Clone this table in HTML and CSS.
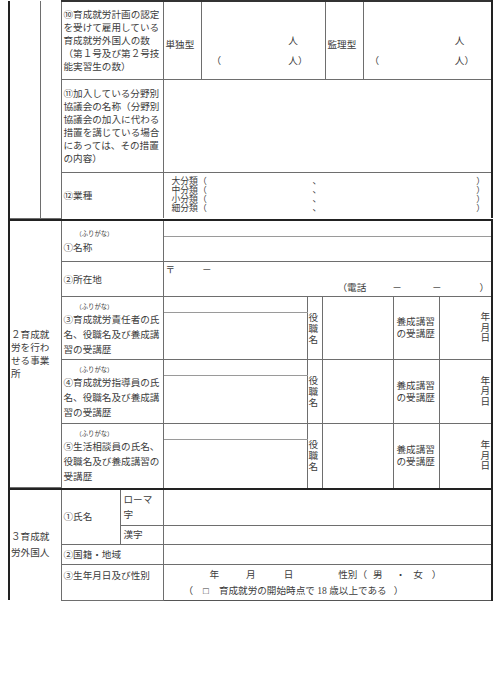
FILE: index.html
```html
<!DOCTYPE html>
<html lang="ja">
<head>
<meta charset="utf-8">
<title>育成就労</title>
<link rel="stylesheet" href="styles.css">
</head>
<body>
<div class="page">

<table class="sec s1">
  <colgroup>
    <col class="w31"><col class="w21"><col class="w102"><col class="w38"><col class="w124"><col class="w38"><col class="w129">
  </colgroup>
  <tr class="h78">
    <td rowspan="3" class="edge-l cont"></td>
    <td rowspan="3" class="cont"></td>
    <td class="lbl l10 topline">⑩育成就労計画の認定<br>を受けて雇用している<br>育成就労外国人の数<br>（第１号及び第２号技<br>能実習生の数）</td>
    <td class="typ topline">単独型</td>
    <td class="cnt cnt-a topline"><div class="cnt-top">人</div><div class="cnt-bot"><span>（</span><span>人）</span></div></td>
    <td class="typ topline">監理型</td>
    <td class="cnt cnt-b topline edge-r"><div class="cnt-top">人</div><div class="cnt-bot"><span>（</span><span>人）</span></div></td>
  </tr>
  <tr class="h93">
    <td class="lbl l11">⑪加入している分野別<br>協議会の名称（分野別<br>協議会の加入に代わる<br>措置を講じている場合<br>にあっては、その措置<br>の内容）</td>
    <td colspan="4" class="edge-r"></td>
  </tr>
  <tr class="h46">
    <td class="lbl nobot">⑫業種</td>
    <td colspan="4" class="edge-r nobot cls">
      <div class="cl"><span>大分類（</span><span>、</span><span>）</span></div>
      <div class="cl"><span>中分類（</span><span>、</span><span>）</span></div>
      <div class="cl"><span>小分類（</span><span>、</span><span>）</span></div>
      <div class="cl"><span>細分類（</span><span>、</span><span>）</span></div>
    </td>
  </tr>
</table>

<table class="sec s2">
  <colgroup>
    <col class="w52"><col class="w102"><col class="w144"><col class="w15"><col class="w71"><col class="w46"><col class="w53">
  </colgroup>
  <tr class="h17">
    <td rowspan="9" class="seclbl s2lbl edge-l">２育成就<br>労を行わ<br>せる事業<br>所</td>
    <td rowspan="2" class="lbl nm"><div class="furi">（ふりがな）</div>①名称</td>
    <td colspan="5" class="edge-r soft-b"></td>
  </tr>
  <tr class="h25"><td colspan="5" class="edge-r soft-t"></td></tr>
  <tr class="h35">
    <td class="lbl">②所在地</td>
    <td colspan="5" class="edge-r addr">
      <div class="zip"><span>〒</span><span class="zd">－</span></div>
      <div class="tel"><span>（電話</span><span class="t1">－</span><span class="t2">－</span><span class="t3">）</span></div>
    </td>
  </tr>
  <tr class="h16">
    <td rowspan="2" class="lbl pers"><div class="furi">（ふりがな）</div>③育成就労責任者の氏<br>名、役職名及び養成講<br>習の受講歴</td>
    <td class="soft-b"></td>
    <td rowspan="2" class="vert">役<br>職<br>名</td>
    <td rowspan="2"></td>
    <td rowspan="2" class="course">養成講習<br>の受講歴</td>
    <td rowspan="2" class="ymd edge-r">年<br>月<br>日</td>
  </tr>
  <tr class="h47"><td class="soft-t"></td></tr>
  <tr class="h16">
    <td rowspan="2" class="lbl pers"><div class="furi">（ふりがな）</div>④育成就労指導員の氏<br>名、役職名及び養成講<br>習の受講歴</td>
    <td class="soft-b"></td>
    <td rowspan="2" class="vert">役<br>職<br>名</td>
    <td rowspan="2"></td>
    <td rowspan="2" class="course">養成講習<br>の受講歴</td>
    <td rowspan="2" class="ymd edge-r">年<br>月<br>日</td>
  </tr>
  <tr class="h48"><td class="soft-t"></td></tr>
  <tr class="h16">
    <td rowspan="2" class="lbl pers nobot"><div class="furi">（ふりがな）</div>⑤生活相談員の氏名、<br>役職名及び養成講習の<br>受講歴</td>
    <td class="soft-b"></td>
    <td rowspan="2" class="vert nobot">役<br>職<br>名</td>
    <td rowspan="2" class="nobot"></td>
    <td rowspan="2" class="course nobot">養成講習<br>の受講歴</td>
    <td rowspan="2" class="ymd edge-r nobot">年<br>月<br>日</td>
  </tr>
  <tr class="h48"><td class="soft-t nobot"></td></tr>
</table>

<table class="sec s3">
  <colgroup>
    <col class="w52"><col class="w59"><col class="w43"><col class="w329">
  </colgroup>
  <tr class="h36">
    <td rowspan="4" class="seclbl s3lbl edge-l nobot">３育成就<br>労外国人</td>
    <td rowspan="2" class="lbl">①氏名</td>
    <td class="sub rom">ローマ<br>字</td>
    <td class="edge-r"></td>
  </tr>
  <tr class="h19">
    <td class="sub">漢字</td>
    <td class="edge-r"></td>
  </tr>
  <tr class="h20">
    <td colspan="2" class="lbl">②国籍・地域</td>
    <td class="edge-r"></td>
  </tr>
  <tr class="h36">
    <td colspan="2" class="lbl birth">③生年月日及び性別</td>
    <td class="edge-r bottom dob">
      <div class="dob1"><span>年</span><span class="g27">月</span><span class="g28">日</span><span class="g45">性別（</span><span class="g6">男</span><span class="g13">・</span><span class="g8">女</span><span class="g9">）</span></div>
      <div class="dob2"><span>（</span><span class="g10">□</span><span class="g10">育成就労の開始時点で 18 歳以上である</span><span class="g7">）</span></div>
    </td>
  </tr>
</table>

</div>
</body>
</html>
```

FILE: styles.css
```css
* { box-sizing: border-box; }
html, body { margin: 0; padding: 0; background: #fff; }
body {
  font-family: "Liberation Serif", "Noto Sans CJK JP", serif;
  font-size: 9.6px;
  color: #3c3c3c;
}
.page { padding-left: 8px; width: 500px; }

.sec { border-collapse: collapse; table-layout: fixed; width: 483px; }
.sec td {
  border: 1px solid #6e6e6e;
  padding: 0 2px;
  vertical-align: middle;
  line-height: 13px;
  white-space: nowrap;
}
.sec td.edge-l { border-left: 2px solid #222; }
.sec td.edge-r { border-right: 2px solid #222; }
.sec td.topline { border-top: 2px solid #333; }
.sec td.cont { border-top: none; }
.sec td.nobot { border-bottom: none; }
.sec td.soft-b { border-bottom: 1px solid #9a9a9a; }
.sec td.soft-t { border-top: 1px solid #9a9a9a; }
.s2 tr:first-child td, .s3 tr:first-child td { border-top: 2px solid #222; }
.sec td.bottom { border-bottom: 1px solid #555; }

.w15 { width: 15px; } .w21 { width: 21px; } .w31 { width: 31px; }
.w38 { width: 38px; } .w43 { width: 43px; } .w46 { width: 46px; }
.w52 { width: 52px; } .w53 { width: 53px; } .w59 { width: 59px; }
.w71 { width: 71px; } .w102 { width: 102px; } .w124 { width: 124px; }
.w129 { width: 129px; } .w144 { width: 144px; } .w329 { width: 329px; }

.h16 { height: 16px; } .h17 { height: 17px; } .h19 { height: 19px; }
.h20 { height: 20px; } .h25 { height: 25px; } .h35 { height: 35px; }
.h36 { height: 36px; } .h46 { height: 46px; } .h47 { height: 47px; }
.h48 { height: 48px; } .h78 { height: 78px; } .h93 { height: 93px; }

.l10 { line-height: 13.3px; }
.l11 { line-height: 13px; }

.sec td.typ { padding: 8px 0 0 2px; }
.sec td.cnt { vertical-align: top; padding: 29px 17px 0 10px; line-height: 20px; }
.sec td.cnt-b { padding-left: 6px; }
.cnt-top { text-align: right; padding-right: 9.6px; }
.cnt-bot { display: flex; justify-content: space-between; }

.sec td.cls { padding: 0 6px 0 8px; line-height: 9px; font-size: 8.8px; }
.cl { display: grid; grid-template-columns: 141px 1fr auto; }

.seclbl { line-height: 14.3px; }
.sec td.s2lbl { padding-left: 1px; }
.sec td.s3lbl { line-height: 16.5px; padding-left: 1px; }

.furi { font-size: 6.3px; line-height: 12px; padding-left: 12px; }
.sec td.nm { vertical-align: top; padding-top: 7px; line-height: 16px; }
.sec td.pers { vertical-align: top; padding-top: 4px; line-height: 15px; }
.pers .furi { line-height: 11px; }

.sec td.addr { vertical-align: top; padding: 0 0 0 2px; line-height: 13px; }
.zip { display: flex; padding-top: 1px; }
.zd { margin-left: 27px; }
.tel { display: flex; padding-left: 172px; padding-top: 5px; }
.t1 { margin-left: 26px; }
.t2 { margin-left: 30px; }
.t3 { margin-left: 38px; }

.sec td.vert { padding: 0 0 0 1px; line-height: 11px; }
.sec td.course { padding: 0 0 0 3px; line-height: 12px; }
.sec td.ymd { text-align: right; padding: 0 1px 0 0; line-height: 10.5px; }

.sec td.sub { padding-left: 3px; }
.sec td.rom { line-height: 15px; }
.sec td.birth { vertical-align: top; padding-top: 4px; line-height: 14px; }
.sec td.dob { vertical-align: top; padding: 2px 0 0 0; line-height: 16px; }
.dob1 { display: flex; padding-left: 46px; }
.dob2 { display: flex; padding-left: 20px; }
.g6 { margin-left: 6px; } .g7 { margin-left: 7px; } .g8 { margin-left: 8px; }
.g9 { margin-left: 9px; } .g10 { margin-left: 10px; } .g13 { margin-left: 13px; }
.g27 { margin-left: 27px; } .g28 { margin-left: 28px; } .g45 { margin-left: 45px; }
```
